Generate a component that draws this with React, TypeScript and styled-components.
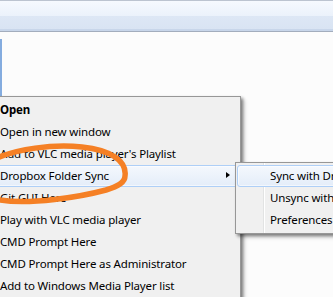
import React from "react";
import styled, { createGlobalStyle } from "styled-components";

const Global = createGlobalStyle`
  html, body { margin: 0; padding: 0; background: #fcfcfc; overflow: hidden; }
  #root { width: 333px; height: 297px; }
`;

const Window = styled.div`
  position: relative;
  width: 333px;
  height: 297px;
  overflow: hidden;
  display: flex;
  flex-direction: column;
  font-family: "Segoe UI", "Noto Sans", sans-serif;
  font-size: 11.5px;
  letter-spacing: -0.15px;
`;

const CommandBar = styled.div`
  flex: none;
  height: 32px;
  background: linear-gradient(
    to bottom,
    #bcc4d0 0px,
    #bcc4d0 1px,
    #f6f9fe 1px,
    #ebf2fb 16px,
    #dde7f5 16px,
    #d9e4f3 29px,
    #c8d6ea 29px,
    #c8d6ea 31px,
    #a3adbd 31px,
    #a3adbd 32px
  );
`;

const Content = styled.div`
  flex: 1;
  background: #fcfcfc;
  padding-top: 7px;
`;

const SelectedEdge = styled.div`
  width: 2px;
  height: 80px;
  background: #84acdf;
`;

const Menu = styled.div<{ $left: number; $top: number; $width: number }>`
  position: absolute;
  left: ${(p) => p.$left}px;
  top: ${(p) => p.$top}px;
  width: ${(p) => p.$width}px;
  box-sizing: border-box;
  display: flex;
  flex-direction: column;
  padding: 2px 1px;
  background: #f0f0f0;
  border: 1px solid #979797;
  box-shadow: 2px 2px 3px rgba(0, 0, 0, 0.45), 4px 4px 4px rgba(0, 0, 0, 0.12);

  &::before {
    content: "";
    position: absolute;
    top: 0;
    bottom: 0;
    left: 27px;
    width: 1px;
    background: #e2e3e3;
    border-right: 1px solid #ffffff;
  }
`;

const Item = styled.div<{ $active?: boolean; $bold?: boolean }>`
  position: relative;
  height: 22px;
  line-height: 20px;
  box-sizing: border-box;
  padding-left: 32px;
  border: 1px solid transparent;
  border-radius: 3px;
  white-space: nowrap;
  color: #000;
  font-weight: ${(p) => (p.$bold ? 700 : 400)};
  ${(p) =>
    p.$active &&
    `
    border-color: #aecff7;
    background: linear-gradient(to bottom, #f4f8fd, #e4edf9);
    box-shadow: inset 0 0 0 1px rgba(255,255,255,0.55);
  `}
`;

const Arrow = styled.span`
  position: absolute;
  right: 8px;
  top: 6px;
  width: 0;
  height: 0;
  border-left: 4px solid #000;
  border-top: 3.5px solid transparent;
  border-bottom: 3.5px solid transparent;
`;

const Overlay = styled.svg`
  position: absolute;
  left: 0;
  top: 0;
  pointer-events: none;
`;

const mainItems = [
  { label: "Open", bold: true },
  { label: "Open in new window" },
  { label: "Add to VLC media player's Playlist" },
  { label: "Dropbox Folder Sync", active: true, sub: true },
  { label: "Git GUI Here" },
  { label: "Play with VLC media player" },
  { label: "CMD Prompt Here" },
  { label: "CMD Prompt Here as Administrator" },
  { label: "Add to Windows Media Player list" },
  { label: "Send to" },
];

const subItems = [
  { label: "Sync with Dropbox", active: true },
  { label: "Unsync with Dropbox" },
  { label: "Preferences" },
];

export default function App() {
  return (
    <>
      <Global />
      <Window>
        <CommandBar />
        <Content>
          <SelectedEdge />
        </Content>

        <Menu $left={-35} $top={96} $width={276}>
          {mainItems.map((it) => (
            <Item key={it.label} $bold={it.bold} $active={it.active}>
              {it.label}
              {it.sub && <Arrow />}
            </Item>
          ))}
        </Menu>

        <Menu $left={235} $top={162} $width={160}>
          {subItems.map((it) => (
            <Item key={it.label} $active={it.active}>
              {it.label}
            </Item>
          ))}
        </Menu>

        <Overlay width={333} height={297} viewBox="0 0 333 297">
          <path
            d="M 125 176 C 127 161, 111 150, 82 147 C 52 144, 16 149, -5 159 C -25 169, -25 190, 0 200 C 30 205, 80 197, 106 190 C 119 186, 125 182, 125 176"
            fill="none"
            stroke="#f58025"
            strokeWidth={5.5}
            strokeLinecap="round"
          />
        </Overlay>
      </Window>
    </>
  );
}
